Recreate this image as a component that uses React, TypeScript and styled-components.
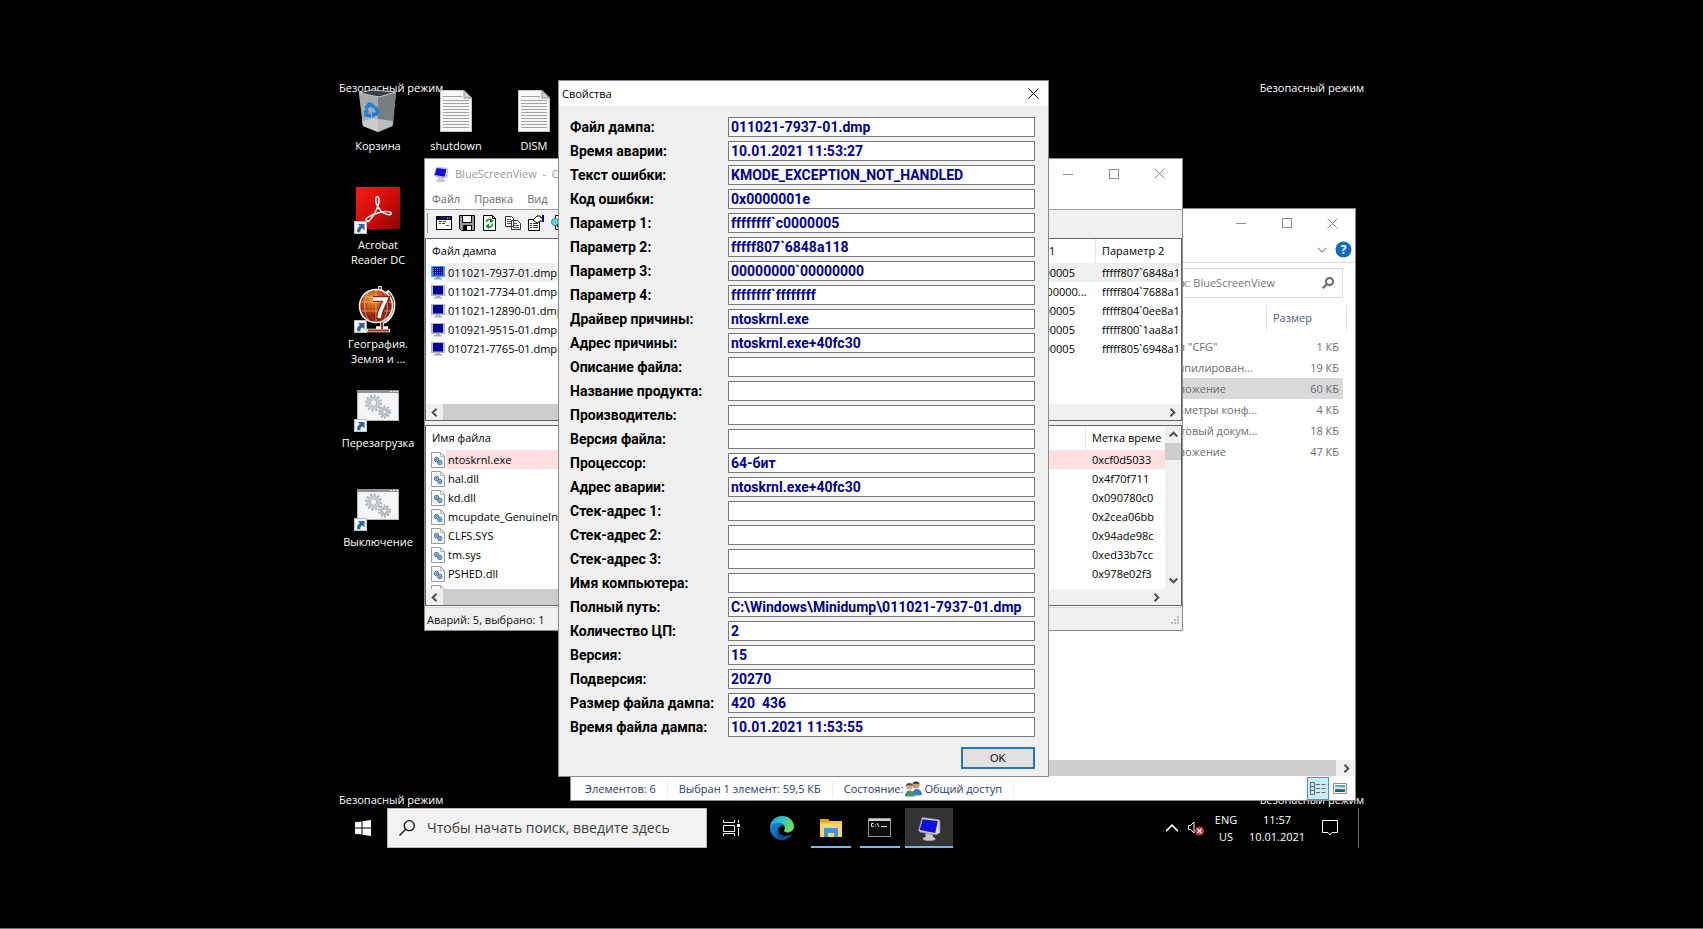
import React from "react";
import styled, { createGlobalStyle, css } from "styled-components";

const GlobalStyle = createGlobalStyle`
  * { box-sizing: border-box; }
  body { margin: 0; background: #000; font: 11px/16px "Open Sans", "Noto Sans", sans-serif; color: #111; }
  button, input { font: inherit; color: inherit; margin: 0; }
  button { padding: 0; border: 0; background: none; }
  ul { list-style: none; margin: 0; padding: 0; }
  svg { display: block; flex: none; }
`;

const Page = styled.div`
  display: flex;
  align-items: center;
  justify-content: center;
  min-height: 100vh;
  background: #000;
  border-bottom: 1px solid #707070;
`;

const Desktop = styled.main`
  display: flex;
  flex-direction: column;
  width: 1025px;
  min-height: 768px;
`;

const Workspace = styled.div`
  position: relative;
  flex: 1;
`;

const SafeMode = styled.span<{ $v: "top" | "bottom"; $h: "left" | "right" }>`
  position: absolute;
  ${(p) => p.$v}: 0;
  ${(p) => p.$h}: 0;
  color: #fff;
`;

/* Desktop shortcuts */

const Shortcuts = styled.div`
  position: absolute;
  top: 7px;
  left: 0;
  display: flex;
`;

const ShortcutColumn = styled.ul`
  width: 78px;
`;

const Shortcut = styled.li`
  display: flex;
  flex-direction: column;
  align-items: center;
  gap: 3px;
  height: 99px;
  color: #fff;
  line-height: 15px;
  text-align: center;
  white-space: pre-line;
`;

/* Windows */

const Window = styled.section<{ $left: number; $top: number; $w: number; $h: number }>`
  position: absolute;
  left: ${(p) => p.$left}px;
  top: ${(p) => p.$top}px;
  width: ${(p) => p.$w}px;
  min-height: ${(p) => p.$h}px;
  display: flex;
  flex-direction: column;
  overflow: hidden;
  background: #fff;
  border: 1px solid #8a8a8a;
`;

const TitleBar = styled.header<{ $h: number }>`
  display: flex;
  align-items: center;
  height: ${(p) => p.$h}px;
  flex: none;
`;

const TitleText = styled.span`
  flex: 1;
  white-space: pre;
  color: #999;
`;

const CaptionButton = styled.button<{ $w: number; $active?: boolean }>`
  width: ${(p) => p.$w}px;
  align-self: stretch;
  display: grid;
  place-items: center;
  color: ${(p) => (p.$active ? "#000" : "#8f8f8f")};
`;

const MenuBar = styled.nav`
  display: flex;
  gap: 14px;
  height: 21px;
  padding: 0 7px;
  align-items: center;
  color: #6d6d6d;
`;

const ToolBar = styled.div`
  display: flex;
  align-items: center;
  gap: 7px;
  height: 29px;
  padding: 0 2px 2px;
  background: #f0f0f0;
  border-top: 1px solid #a0a0a0;
`;

const Grip = styled.span`
  width: 1px;
  height: 20px;
  margin-right: 1px;
  background: #8a8a8a;
`;

const Frame = styled.div<{ $h: number }>`
  display: flex;
  flex-direction: column;
  height: ${(p) => p.$h}px;
  border: 1px solid #646464;
  background: #fff;
  overflow: hidden;
`;

const FrameBody = styled.div`
  display: flex;
  flex: 1;
  min-height: 0;
`;

const TableClip = styled.div`
  flex: 1;
  min-width: 0;
  overflow: hidden;
`;

const ListTable = styled.table`
  width: 100%;
  table-layout: fixed;
  border-collapse: separate;
  border-spacing: 0;
  color: #000;
  th, td {
    padding: 0 0 0 6px;
    font-weight: normal;
    text-align: left;
    white-space: nowrap;
    overflow: hidden;
  }
  th { height: 24px; border-right: 1px solid #e5e5e5; }
  th:last-child { border-right: 0; }
  td { height: 19px; line-height: 18px; }
  td:first-child { padding: 0; }
`;

const Row = styled.tr<{ $bg?: string }>`
  background: ${(p) => p.$bg || "#fff"};
`;

const FileCell = styled.span`
  display: flex;
  align-items: center;
  gap: 2px;
`;

const IconSlot = styled.span`
  width: 20px;
  height: 19px;
  padding-right: 1px;
  display: grid;
  place-items: center end;
  background: #fff;
`;

const HScroll = styled.div<{ $gap: number }>`
  display: flex;
  align-items: center;
  height: 16px;
  flex: none;
  background: #f0f0f0;
  color: #505050;
  padding-right: ${(p) => p.$gap}px;
`;

const ScrollButton = styled.button`
  width: 17px;
  height: 17px;
  display: grid;
  place-items: center;
`;

const HThumb = styled.span<{ $end: number }>`
  flex: 1;
  align-self: stretch;
  margin-right: ${(p) => p.$end}px;
  background: #cdcdcd;
`;

const VScroll = styled.div`
  display: flex;
  flex-direction: column;
  width: 16px;
  background: #f0f0f0;
  color: #505050;
`;

const VThumb = styled.span`
  height: 17px;
  margin-bottom: auto;
  background: #cdcdcd;
`;

const Splitter = styled.div`
  height: 4px;
  background: #f0f0f0;
`;

const StatusBar = styled.footer`
  display: flex;
  align-items: center;
  justify-content: space-between;
  flex: 1;
  margin-top: 1px;
  padding: 2px 2px 0;
  background: #f0f0f0;
  border-top: 1px solid #d7d7d7;
`;

/* Explorer */

const RibbonRow = styled.div`
  display: flex;
  align-items: center;
  justify-content: flex-end;
  gap: 8px;
  height: 26px;
  padding-right: 3px;
  color: #8f8f8f;
  border-bottom: 1px solid #dadbdc;
`;

const SearchRow = styled.div`
  display: flex;
  justify-content: flex-end;
  height: 42px;
  padding: 5px 12px 7px;
`;

const FolderSearch = styled.label`
  display: flex;
  align-items: center;
  width: 197px;
  padding: 0 8px;
  border: 1px solid #d9d9d9;
  color: #6d6d6d;
  input {
    flex: 1;
    min-width: 0;
    border: 0;
    padding: 0;
    outline: 0;
    background: none;
  }
  input::placeholder { color: #7a7a7a; opacity: 1; }
`;

const DetailsTable = styled.table`
  width: 190px;
  margin: 0 8px 0 auto;
  border-collapse: separate;
  border-spacing: 0;
  table-layout: fixed;
  color: #6d6d6d;
  th, td { font-weight: normal; text-align: left; white-space: nowrap; }
  th { height: 25px; padding: 0 6px; color: #4c607a; border-right: 1px solid #e0e0e0; }
  td { height: 21px; padding: 0; }
  td:last-child { text-align: right; padding-right: 4px; border-right: 4px solid transparent; background-clip: padding-box; }
  tbody::before { content: ""; display: block; height: 6px; }
`;

const SelectedTd = styled.td`
  background: #d9d9d9;
`;

const Spacer = styled.div`
  flex: 1;
`;

const ExplorerStatus = styled.footer`
  display: flex;
  align-items: center;
  height: 24px;
  padding: 1px 4px 0 3px;
  color: #26406b;
`;

const StatusItem = styled.span`
  display: flex;
  align-items: center;
  gap: 2px;
  padding: 0 11px;
  border-right: 1px solid #eee;
`;

const ViewButton = styled.button<{ $on?: boolean }>`
  display: grid;
  place-items: center;
  width: 22px;
  height: 23px;
  ${(p) =>
    p.$on &&
    css`
      margin-left: auto;
      background: #cde9f5;
      border: 1px solid #3c9ccb;
    `}
`;

/* Properties dialog */

const DialogBody = styled.form`
  flex: 1;
  padding: 11px 13px 7px 11px;
  background: #f0f0f0;
`;

const Field = styled.div`
  display: flex;
  align-items: center;
  height: 20px;
  margin-bottom: 4px;
  font: bold 14px/18px Roboto, "Liberation Sans", sans-serif;
  color: #000;
  label { width: 158px; white-space: nowrap; }
  input {
    flex: 1;
    min-width: 0;
    height: 20px;
    padding: 0 2px;
    border: 1px solid #7a7a7a;
    border-radius: 0;
    background: #fff;
    color: #000096;
    outline: 0;
  }
`;

const OkButton = styled.button`
  display: block;
  width: 74px;
  height: 22px;
  margin: 10px 0 0 auto;
  border: 2px solid #2a74b0;
  background: #e1e1e1;
  font: 11px/16px "Liberation Sans", Arial, sans-serif;
`;

/* Taskbar */

const TaskBar = styled.footer`
  display: flex;
  height: 40px;
  color: #fff;
`;

const SearchBox = styled.label`
  display: flex;
  align-items: center;
  gap: 12px;
  width: 320px;
  padding: 0 11px;
  background: #f2f2f2;
  border: 1px solid #b8b8b8;
  color: #222;
  font-size: 14px;
  line-height: 20px;
  input {
    flex: 1;
    min-width: 0;
    padding: 0;
    border: 0;
    outline: 0;
    background: none;
  }
  input::placeholder { color: #3c3c3c; opacity: 1; }
`;

const PlainTask = styled.button`
  width: 48px;
  display: grid;
  place-items: center;
`;

const Tasks = styled.div`
  display: flex;
  gap: 1px;
  margin-left: 3px;
`;

const Task = styled.button<{ $state?: "running" | "active" }>`
  position: relative;
  width: 48px;
  display: grid;
  place-items: center;
  background: ${(p) => (p.$state === "active" ? "#333" : "none")};
  ${(p) =>
    p.$state &&
    css`
      &::after {
        content: "";
        position: absolute;
        bottom: 0;
        left: ${p.$state === "active" ? 0 : 4}px;
        right: ${p.$state === "active" ? 0 : 4}px;
        height: 2px;
        background: #76b9ed;
      }
    `}
`;

const Tray = styled.div`
  display: flex;
  margin-left: auto;
`;

const TrayButton = styled.button<{ $w: number }>`
  width: ${(p) => p.$w}px;
  display: grid;
  place-items: center;
  align-content: center;
  line-height: 17px;
  white-space: nowrap;
`;

const ShowDesktop = styled.button`
  width: 6px;
  margin-left: 8px;
  border-left: 1px solid #6e6e6e;
`;

/* Icons */

const Minimize = () => (
  <svg width="10" height="10" viewBox="0 0 10 10" stroke="currentColor"><path d="M0 5.5h10" /></svg>
);
const Maximize = () => (
  <svg width="10" height="10" viewBox="0 0 10 10" fill="none" stroke="currentColor"><rect x=".5" y=".5" width="9" height="9" /></svg>
);
const Close = () => (
  <svg width="11" height="11" viewBox="0 0 11 11" stroke="currentColor"><path d="M.5.5l10 10M10.5.5l-10 10" /></svg>
);

const Chevron = ({ dir, size = 9, w = 2 }: { dir: "left" | "right" | "up" | "down"; size?: number; w?: number }) => {
  const d = { left: "M6.500 .700L2.700 4.500L6.500 8.300", right: "M2.500 .700l3.800 3.800L2.500 8.300", up: "M.700 6.500l3.800-3.800L8.300 6.500", down: "M.700 2.500l3.800 3.800L8.300 2.500" }[dir];
  return (
    <svg width={size} height={size} viewBox="0 0 9 9" fill="none" stroke="currentColor" strokeWidth={w}><path d={d} /></svg>
  );
};

const Arrow = () => (
  <g>
    <rect x=".5" y="35.500" width="12" height="12" fill="#f5f7f9" stroke="#b9c2cb" />
    <path d="M4 38h6.500v6.500L8.300 42.300C6.600 43.200 6.200 44.500 6.400 46.300H3.200C2.700 43.400 3.700 41.500 5.900 40z" fill="#2f63a4" />
  </g>
);

const RecycleBin = () => (
  <svg width="48" height="48" viewBox="0 0 48 48">
    <path d="M5 6L24 9L42 5L39 39L24 45L9 39z" fill="#8c9093" />
    <path d="M5 6L24 10V45L9 39z" fill="#a8abad" />
    <path d="M24 10L42 6L38 39L24 45z" fill="#797d80" />
    <path d="M5 6L18 3L42 5L25 10z" fill="#3c4043" stroke="#c7c9ca" strokeWidth="1" />
    <path d="M8 34l10-3 21 3-1 5-14 6-15-6z" fill="#d5d7d8" opacity=".7" />
    <g fill="none" stroke="#1c80d4" strokeWidth="3.500">
      <path d="M12 22l3-5 4 2" /><path d="M21 20l3 5-3 3" /><path d="M17 29l-5-1 0-4" />
    </g>
    <path d="M17 15l5 5-5 1zM24 27l-6 4 0-6zM9 24l4-2 3 4z" fill="#1c80d4" />
  </svg>
);

const TextFile = () => (
  <svg width="48" height="48" viewBox="0 0 48 48">
    <path d="M8.500 3.500h23.500l7.500 7.500v33.500h-31z" fill="#f7f7f7" stroke="#c5c5c5" />
    <path d="M32 3.500v7.500h7.500z" fill="#d4d4d4" stroke="#909090" />
    <path d="M11 9.500h19M11 13.500h26M11 16.500h26M11 19.500h26M11 22.500h26M11 25.500h26M11 28.500h26M11 31.500h26M11 34.500h26M11 37.500h26M11 40.500h26" stroke="#a3a3a3" />
  </svg>
);

const Acrobat = () => (
  <svg width="48" height="48" viewBox="0 0 48 48">
    <defs>
      <linearGradient id="acro" x1="0" y1="0" x2="1" y2="1">
        <stop offset="0" stopColor="#ff1a14" /><stop offset=".5" stopColor="#cf0d0a" /><stop offset="1" stopColor="#8a0503" />
      </linearGradient>
    </defs>
    <rect x="2" y="1" width="44" height="42" fill="url(#acro)" />
    <path d="M13 35c-3-2 3-6 11-8 6-2 12-2 13 0 1 3-6 2-10-2-4-4-6-10-5-13 1-3 4-1 3 4-1 6-6 15-9 18-1 1-2 2-3 1z" fill="none" stroke="#fff" strokeWidth="1.500" />
    <Arrow />
  </svg>
);

const Globe = () => (
  <svg width="48" height="48" viewBox="0 0 48 48">
    <defs>
      <radialGradient id="globe" cx=".4" cy=".3"><stop offset="0" stopColor="#f0a03c" /><stop offset=".6" stopColor="#c4501a" /><stop offset="1" stopColor="#8e2410" /></radialGradient>
    </defs>
    <path d="M26 1v6M33 6c10 8 9 26-5 32v5M13 45.500h23M22 43h12" fill="none" stroke="#fff" strokeWidth="3.500" />
    <path d="M26 2v5M34 8c8 8 7 22-6 29v7M14 45.500h21" fill="none" stroke="#a42a18" strokeWidth="2" />
    <circle cx="22" cy="21" r="16.500" fill="url(#globe)" stroke="#fff" strokeWidth="1.500" />
    <path d="M6 17h32M7 26h30M9 12h26M22 5v32M15 6c-6 9-6 21 0 30M29 6c6 9 6 21 0 30" fill="none" stroke="#ffd9a0" strokeWidth=".7" opacity=".8" />
    <path d="M19 14h13c-2 6-6 9-7 20" fill="none" stroke="#8a2412" strokeWidth="6" />
    <path d="M19 14h13c-2 6-6 9-7 19" fill="none" stroke="#fff" strokeWidth="3.500" />
    <Arrow />
  </svg>
);

const GearWindow = () => (
  <svg width="48" height="48" viewBox="0 0 48 48">
    <rect x="3.500" y="6.500" width="41" height="30" fill="#f4f5f6" stroke="#b4b7b9" />
    <rect x="3" y="6" width="42" height="3" fill="#8f9294" />
    <path d="M36 7.500h2M39 7.500h2M42 7.500h2" stroke="#e8e8e8" />
    <g fill="none" stroke="#a9b1b7">
      <circle cx="19.500" cy="19" r="7" strokeWidth="3" strokeDasharray="2 1.660" />
      <circle cx="19.500" cy="19" r="5.200" strokeWidth="3" stroke="#c3c9cd" />
      <circle cx="19.500" cy="19" r="3.300" strokeWidth="1" />
      <circle cx="30.500" cy="28" r="5.200" strokeWidth="2.500" strokeDasharray="1.800 1.470" />
      <circle cx="30.500" cy="28" r="3.600" strokeWidth="2.500" stroke="#b9c0c5" />
      <circle cx="30.500" cy="28" r="2" strokeWidth="1" />
    </g>
    <Arrow />
  </svg>
);

const Monitor = ({ selected }: { selected?: boolean }) => (
  <svg width="14" height="15" viewBox="0 0 14 15">
    <rect x=".5" y="1.500" width="13" height="10" fill={selected ? "#3b8fe0" : "#c3c7d0"} stroke={selected ? "#4aa0ea" : "#aeb4c0"} />
    <rect x="2" y="2" width="10" height="8.500" fill="#000096" />
    {selected && <path d="M2 3.500h10M2 5.500h10M2 7.500h10M2 9.500h10" stroke="#3f8fe6" strokeDasharray="1 1" />}
    <path d="M5 12h4v1h2v1.500H3V13h2z" fill={selected ? "#6aa7da" : "#a9adb6"} />
  </svg>
);

const TiltedMonitor = ({ size }: { size: number }) => (
  <svg width={size} height={size} viewBox="1 -1 24 24">
    <path d="M6 .500L2.500 13l2 1.500 15 2.500 3.500-2V4l-1-1.500z" fill="#d9d9de" stroke="#8c8c94" strokeWidth=".7" />
    <path d="M6.500 2L3.500 12.500l15 2.800L21 3.800z" fill="#0d10e0" />
    <path d="M9 15.500l7 1 .5 3c3 .5 3 2.500-.5 3-4 .7-9 0-9.500-1.500 0-1 1.500-1.500 3-1.800z" fill="#c9c9cf" stroke="#909098" strokeWidth=".5" />
  </svg>
);

const GearFile = () => (
  <svg width="14" height="16" viewBox="0 0 14 16">
    <path d="M.5.5h9l4 4v11H.5z" fill="#fafafa" stroke="#9a9a9a" />
    <path d="M9.500.5v4h4" fill="none" stroke="#b5b5b5" />
    <g fill="#b9d3ea" stroke="#2d6499" strokeWidth=".9">
      <circle cx="5.500" cy="7.500" r="2.200" /><circle cx="5.500" cy="7.500" r=".6" />
      <circle cx="8.800" cy="10.500" r="2.200" /><circle cx="8.800" cy="10.500" r=".6" />
    </g>
  </svg>
);

const ToolIcons = [
  <svg key="options" width="16" height="16" viewBox="0 0 16 16"><path d="M0 1h16v14H0z" fill="#000" /><path d="M1 2h14v2H1z" fill="#000080" /><path d="M1 5h14v9H1z" fill="#fff" /><path d="M11 3h1M13 3h1" stroke="#fff" /><path d="M3 6.500h3M7 6.500h3M3 8.500h2M6 8.500h3M10 10.500h3" stroke="#444" /></svg>,
  <svg key="save" width="16" height="16" viewBox="0 0 16 16"><path d="M.5.5h15v15H2.500l-2-2z" fill="#9a9a9a" stroke="#000" /><path d="M3.500.5h9v7h-9z" fill="#fff" stroke="#000" /><path d="M4.500 10.500h8v5h-8z" fill="#fff" stroke="#000" /><path d="M5 11h3v4H5z" fill="#000" /></svg>,
  <svg key="refresh" width="16" height="16" viewBox="0 0 16 16"><path d="M1.500.5h9l3 3v12h-12z" fill="#fff" stroke="#000" /><path d="M10.500.5v3h3" fill="none" stroke="#000" /><path d="M4.500 7c0-3 3-3 4.500-2M10.500 8.500c0 4-3 4-5 3" fill="none" stroke="#0a8a2a" strokeWidth="1.500" /><path d="M8 3l4 3-4 2zM7 8.500L3.500 11 7 14z" fill="#0a8a2a" /></svg>,
  <svg key="copy" width="16" height="16" viewBox="0 0 16 16"><path d="M.5 1.500h6l2 2v8h-8zM6.500 5.500h6l3 3v6h-9z" fill="#fff" stroke="#333" /><path d="M2 4.500h4M2 6.500h4M2 8.500h4M8 8.500h4M8 10.500h6M8 12.500h6" stroke="#555" /></svg>,
  <svg key="properties" width="16" height="16" viewBox="0 0 16 16"><path d="M.5 4.500h11v11H.5z" fill="#fff" stroke="#000" /><path d="M2 8.500h2M5 8.500h5M2 10.500h2M5 10.500h5M2 12.500h2M5 12.500h5" stroke="#333" /><path d="M5 5l4-4h3l1 2h2v3h-3l-3 2z" fill="#fff" stroke="#000" /><path d="M14 0h2v7h-2z" fill="#000096" /></svg>,
  <svg key="find" width="16" height="16" viewBox="0 0 16 16"><path d="M4.500.5h10v14h-10z" fill="#fff" stroke="#000" /><circle cx="4" cy="7" r="3.500" fill="#5fd6dc" stroke="#3b8c94" /><path d="M6 10l4 4" stroke="#000" strokeWidth="2" /></svg>,
];

const People = () => (
  <svg width="17" height="16" viewBox="0 0 17 16">
    <circle cx="11" cy="4" r="3.500" fill="#c99b74" /><path d="M7.500 3.500C7.500-.5 14.500-.5 14.500 3.500c-2-1-5-1-7 0z" fill="#4b3a2a" />
    <path d="M6.500 15c0-9 10-9 10.500-1z" fill="#3c7fb8" />
    <circle cx="4.500" cy="5.500" r="3.300" fill="#d8ab84" /><path d="M1 5C1 1 8 1 8 5 6 4 3 4 1 5z" fill="#5d4a38" />
    <path d="M0 15.500c0-8 9-8 9.500 0z" fill="#4a9070" />
  </svg>
);

/* Data */

const dumps: [string, string, string][] = [
  ["011021-7937-01.dmp", "ffffffff`c0000005", "fffff807`6848a118"],
  ["011021-7734-01.dmp", "00000000`00000...", "fffff804`7688a118"],
  ["011021-12890-01.dmp", "ffffffff`c0000005", "fffff804`0ee8a118"],
  ["010921-9515-01.dmp", "ffffffff`c0000005", "fffff800`1aa8a118"],
  ["010721-7765-01.dmp", "ffffffff`c0000005", "fffff805`6948a118"],
];

const modules: [string, string][] = [
  ["ntoskrnl.exe", "0xcf0d5033"],
  ["hal.dll", "0x4f70f711"],
  ["kd.dll", "0x090780c0"],
  ["mcupdate_GenuineIntel.dll", "0x2cea06bb"],
  ["CLFS.SYS", "0x94ade98c"],
  ["tm.sys", "0xed33b7cc"],
  ["PSHED.dll", "0x978e02f3"],
  ["", ""],
];

const files: [string, string][] = [
  ['Файл "CFG"', "1 КБ"],
  ["Скомпилирован...", "19 КБ"],
  ["Приложение", "60 КБ"],
  ["Параметры конф...", "4 КБ"],
  ["Текстовый докум...", "18 КБ"],
  ["Приложение", "47 КБ"],
];

const fields: [string, string][] = [
  ["Файл дампа:", "011021-7937-01.dmp"],
  ["Время аварии:", "10.01.2021 11:53:27"],
  ["Текст ошибки:", "KMODE_EXCEPTION_NOT_HANDLED"],
  ["Код ошибки:", "0x0000001e"],
  ["Параметр 1:", "ffffffff`c0000005"],
  ["Параметр 2:", "fffff807`6848a118"],
  ["Параметр 3:", "00000000`00000000"],
  ["Параметр 4:", "ffffffff`ffffffff"],
  ["Драйвер причины:", "ntoskrnl.exe"],
  ["Адрес причины:", "ntoskrnl.exe+40fc30"],
  ["Описание файла:", ""],
  ["Название продукта:", ""],
  ["Производитель:", ""],
  ["Версия файла:", ""],
  ["Процессор:", "64-бит"],
  ["Адрес аварии:", "ntoskrnl.exe+40fc30"],
  ["Стек-адрес 1:", ""],
  ["Стек-адрес 2:", ""],
  ["Стек-адрес 3:", ""],
  ["Имя компьютера:", ""],
  ["Полный путь:", "C:\\Windows\\Minidump\\011021-7937-01.dmp"],
  ["Количество ЦП:", "2"],
  ["Версия:", "15"],
  ["Подверсия:", "20270"],
  ["Размер файла дампа:", "420\u00a0\u00a0436"],
  ["Время файла дампа:", "10.01.2021 11:53:55"],
];

const shortcuts: [string, () => React.ReactElement][][] = [
  [
    ["Корзина", RecycleBin],
    ["Acrobat\nReader DC", Acrobat],
    ["География.\nЗемля и ...", Globe],
    ["Перезагрузка", GearWindow],
    ["Выключение", GearWindow],
  ],
  [["shutdown", TextFile]],
  [["DISM", TextFile]],
];

const CaptionButtons = () => (
  <>
    <CaptionButton $w={46} aria-label="Свернуть"><Minimize /></CaptionButton>
    <CaptionButton $w={45} aria-label="Развернуть"><Maximize /></CaptionButton>
    <CaptionButton $w={46} aria-label="Закрыть"><Close /></CaptionButton>
  </>
);

const Explorer = () => (
  <Window $left={231} $top={128} $w={786} $h={593}>
    <TitleBar $h={28}><TitleText /><CaptionButtons /></TitleBar>
    <RibbonRow>
      <Chevron dir="down" size={10} w={1} />
      <svg width="17" height="17" viewBox="0 0 17 17"><circle cx="8.500" cy="8.500" r="8" fill="#0f6cbd" /><text x="8.500" y="13" fontSize="12" fontWeight="bold" fill="#fff" textAnchor="middle">?</text></svg>
    </RibbonRow>
    <SearchRow>
      <FolderSearch>
        <input placeholder="Поиск: BlueScreenView" />
        <svg width="12" height="12" viewBox="0 0 12 12" fill="none" stroke="#666" strokeWidth="2"><circle cx="7.500" cy="4.500" r="3.500" /><path d="M5 7L.7 11.300" /></svg>
      </FolderSearch>
    </SearchRow>
    <DetailsTable>
      <colgroup><col /><col style={{ width: 80 }} /></colgroup>
      <thead><tr><th>Тип</th><th>Размер</th></tr></thead>
      <tbody>
        {files.map(([type, size], i) => (
          <tr key={i}>
            {i === 2 ? <><SelectedTd>{type}</SelectedTd><SelectedTd>{size}</SelectedTd></> : <><td>{type}</td><td>{size}</td></>}
          </tr>
        ))}
      </tbody>
    </DetailsTable>
    <Spacer />
    <HScroll $gap={0}>
      <ScrollButton aria-label="Влево"><Chevron dir="left" /></ScrollButton>
      <HThumb $end={2} />
      <ScrollButton aria-label="Вправо"><Chevron dir="right" /></ScrollButton>
    </HScroll>
    <ExplorerStatus>
      <StatusItem>Элементов: 6</StatusItem>
      <StatusItem>Выбран 1 элемент: 59,5 КБ</StatusItem>
      <StatusItem>Состояние: <People /> Общий доступ</StatusItem>
      <ViewButton $on aria-label="Таблица">
        <svg width="16" height="13" viewBox="0 0 16 13" fill="none" stroke="#5d6b75"><path d="M.5.5h4v12h-4zM.5 4.500h4M.5 8.500h4M6 2.500h4M11.500 2.500h4M6 6.500h4M11.500 6.500h4M6 10.500h4M11.500 10.500h4" /></svg>
      </ViewButton>
      <ViewButton aria-label="Крупные значки">
        <svg width="14" height="11" viewBox="0 0 14 11"><path d="M.5.5h13v10H.5z" fill="#fff" stroke="#8a9299" /><path d="M2 2h10v7H2z" fill="#5aa0e0" /><path d="M2 4c3-1 5 1 10 0v2c-4 1-7-1-10 0z" fill="#d8e8f4" /><path d="M2 7c3-2 6 1 10-1v3H2z" fill="#2f5f5a" /></svg>
      </ViewButton>
    </ExplorerStatus>
  </Window>
);

const IconGap = styled.span`
  padding: 0 6px 0 8px;
`;

const BlueScreenView = () => (
  <Window $left={85} $top={78} $w={759} $h={473}>
    <TitleBar $h={29}>
      <IconGap><TiltedMonitor size={16} /></IconGap>
      <TitleText>{"BlueScreenView  -  C:\\Windows\\Minidump"}</TitleText>
      <CaptionButtons />
    </TitleBar>
    <MenuBar><span>Файл</span><span>Правка</span><span>Вид</span></MenuBar>
    <ToolBar><Grip />{ToolIcons}</ToolBar>
    <Frame $h={183}>
      <FrameBody>
        <TableClip>
          <ListTable>
            <colgroup><col /><col style={{ width: 109 }} /><col style={{ width: 85 }} /></colgroup>
            <thead><tr><th>Файл дампа</th><th>Параметр 1</th><th>Параметр 2</th></tr></thead>
            <tbody>
              {dumps.map(([name, p1, p2], i) => (
                <Row key={name} $bg={i === 0 ? "#f0f0f0" : undefined}>
                  <td><FileCell><IconSlot><Monitor selected={i === 0} /></IconSlot>{name}</FileCell></td>
                  <td>{p1}</td>
                  <td>{p2}</td>
                </Row>
              ))}
            </tbody>
          </ListTable>
        </TableClip>
      </FrameBody>
      <HScroll $gap={0}>
        <ScrollButton aria-label="Влево"><Chevron dir="left" /></ScrollButton>
        <HThumb $end={200} />
        <ScrollButton aria-label="Вправо"><Chevron dir="right" /></ScrollButton>
      </HScroll>
    </Frame>
    <Splitter />
    <Frame $h={181}>
      <FrameBody>
        <TableClip>
          <ListTable>
            <colgroup><col /><col style={{ width: 79 }} /></colgroup>
            <thead><tr><th>Имя файла</th><th>Метка време</th></tr></thead>
            <tbody>
              {modules.map(([name, stamp], i) => (
                <Row key={name} $bg={i === 0 ? "#ffdfdf" : undefined}>
                  <td><FileCell><IconSlot><GearFile /></IconSlot>{name}</FileCell></td>
                  <td>{stamp}</td>
                </Row>
              ))}
            </tbody>
          </ListTable>
        </TableClip>
        <VScroll>
          <ScrollButton aria-label="Вверх"><Chevron dir="up" /></ScrollButton>
          <VThumb />
          <ScrollButton aria-label="Вниз"><Chevron dir="down" /></ScrollButton>
        </VScroll>
      </FrameBody>
      <HScroll $gap={16}>
        <ScrollButton aria-label="Влево"><Chevron dir="left" /></ScrollButton>
        <HThumb $end={200} />
        <ScrollButton aria-label="Вправо"><Chevron dir="right" /></ScrollButton>
      </HScroll>
    </Frame>
    <StatusBar>
      <span>Аварий: 5, выбрано: 1</span>
      <svg width="9" height="9" viewBox="0 0 9 9" fill="#bcbcbc"><path d="M6 0h2v2H6zM3 3h2v2H3zM6 3h2v2H6zM0 6h2v2H0zM3 6h2v2H3zM6 6h2v2H6z" /></svg>
    </StatusBar>
  </Window>
);

const DialogTitle = styled(TitleText)`
  padding-left: 3px;
  color: #000;
`;

const PropertiesDialog = () => (
  <Window $left={219} $top={0} $w={491} $h={697} role="dialog" aria-label="Свойства">
    <TitleBar $h={25}>
      <DialogTitle>Свойства</DialogTitle>
      <CaptionButton $w={30} $active aria-label="Закрыть"><Close /></CaptionButton>
    </TitleBar>
    <DialogBody onSubmit={(e) => e.preventDefault()}>
      {fields.map(([label, value], i) => (
        <Field key={label}>
          <label htmlFor={`field-${i}`}>{label}</label>
          <input id={`field-${i}`} defaultValue={value} readOnly />
        </Field>
      ))}
      <OkButton>OK</OkButton>
    </DialogBody>
  </Window>
);

const EdgeIcon = () => (
  <svg width="24" height="24" viewBox="0 0 24 24">
    <defs>
      <linearGradient id="e1" x1="0" y1="0" x2="1" y2=".4"><stop offset="0" stopColor="#1e9be0" /><stop offset=".5" stopColor="#2fc3c8" /><stop offset="1" stopColor="#6be05a" /></linearGradient>
      <linearGradient id="e2" x1="0" y1="0" x2="1" y2="1"><stop offset="0" stopColor="#1b8ad8" /><stop offset="1" stopColor="#0c4f9c" /></linearGradient>
    </defs>
    <path d="M0 12C0 5 5 0 12 0s12 5 12 10.500c0 3.500-3 6-6.500 6-2.500 0-4-1-3.300-2.200C16 12 14.500 7.500 9.500 7.500 4.500 7.500 0 10 0 12z" fill="url(#e1)" />
    <path d="M0 12c0-3 4-5.500 9-5.200 3 .2 5 2 5.500 3.700-3-2-6.500.5-6.500 4.500C8 20 12 23 16 23.300 8 26 0 20 0 12z" fill="url(#e2)" />
    <path d="M9 13c-1.500 6 6 9 13 5-2 4-6 6-10 6C6 21 6 15 9 13z" fill="#114a8b" />
  </svg>
);

const Taskbar = () => (
  <TaskBar>
    <PlainTask aria-label="Пуск">
      <svg width="16" height="16" viewBox="0 0 16 16" fill="#fff"><path d="M0 2.300L6.500 1.400V7.500H0zM7.500 1.200L16 0V7.500H7.500zM0 8.500h6.500v6.100L0 13.700zM7.500 8.500H16V16l-8.500-1.200z" /></svg>
    </PlainTask>
    <SearchBox>
      <svg width="16" height="16" viewBox="0 0 16 16" fill="none" stroke="#111" strokeWidth="1.300"><circle cx="10.300" cy="5.700" r="5" /><path d="M6.700 9.300L.5 15.500" /></svg>
      <input placeholder="Чтобы начать поиск, введите здесь" />
    </SearchBox>
    <PlainTask aria-label="Представление задач">
      <svg width="17" height="16" viewBox="0 0 17 16" fill="none" stroke="#fff"><path d="M.5 0v2.500h11V0M.5 5.500h11v6H.5zM.5 16v-2.500h11V16M15.500 0v3M15.500 8v8" /><path d="M14 4h3v3h-3z" fill="#fff" stroke="none" /></svg>
    </PlainTask>
    <Tasks>
      <Task aria-label="Edge"><EdgeIcon /></Task>
      <Task $state="running" aria-label="Проводник">
        <svg width="22" height="20" viewBox="0 0 22 20"><path d="M0 1h8l2 2h12v16H0z" fill="#e2a325" /><path d="M0 5h22v14H0z" fill="#ffd766" /><path d="M0 4.500h10l1.500-1.500H22v3H0z" fill="#fbc544" /><path d="M4 19v-9h14v9h-4v-4H8v4z" fill="#3c95d6" /></svg>
      </Task>
      <Task $state="running" aria-label="Командная строка">
        <svg width="24" height="20" viewBox="0 0 24 20"><path d="M.5.500h22v18H.500z" fill="#0c0c0c" stroke="#9a9a9a" /><path d="M1 1h21v2H1z" fill="#d0d0d0" /><path d="M5.500 5.500h-2v3h2M7.500 6v.500M7.500 8v.500M9 5l2 4M13 8.500h6" stroke="#eee" fill="none" /></svg>
      </Task>
      <Task $state="active" aria-label="BlueScreenView"><TiltedMonitor size={25} /></Task>
    </Tasks>
    <Tray>
      <TrayButton $w={24} aria-label="Скрытые значки"><Chevron dir="up" size={14} w={1} /></TrayButton>
      <TrayButton $w={24} aria-label="Громкость">
        <svg width="16" height="16" viewBox="0 0 16 16"><path d="M.5 5.500h2L6 2v11L2.500 9.500h-2z" fill="none" stroke="#fff" /><circle cx="11.500" cy="11" r="4.500" fill="#d3323c" /><path d="M9.500 9l4 4M13.500 9l-4 4" stroke="#fff" strokeWidth="1.300" /></svg>
      </TrayButton>
      <TrayButton $w={36}><span>ENG</span><span>US</span></TrayButton>
      <TrayButton $w={66}><span>11:57</span><span>10.01.2021</span></TrayButton>
      <TrayButton $w={40} aria-label="Уведомления">
        <svg width="16" height="16" viewBox="0 0 16 16" fill="none" stroke="#fff"><path d="M.5.500h15v12H10l-2 2.500-2-2.500H.500z" /></svg>
      </TrayButton>
      <ShowDesktop aria-label="Свернуть все окна" />
    </Tray>
  </TaskBar>
);

export default function App() {
  return (
    <Page>
      <GlobalStyle />
      <Desktop>
        <Workspace>
          <SafeMode $v="top" $h="left">Безопасный режим</SafeMode>
          <SafeMode $v="top" $h="right">Безопасный режим</SafeMode>
          <SafeMode $v="bottom" $h="left">Безопасный режим</SafeMode>
          <SafeMode $v="bottom" $h="right">Безопасный режим</SafeMode>
          <Shortcuts>
            {shortcuts.map((column, i) => (
              <ShortcutColumn key={i}>
                {column.map(([name, Icon]) => (
                  <Shortcut key={name}><Icon />{name}</Shortcut>
                ))}
              </ShortcutColumn>
            ))}
          </Shortcuts>
          <Explorer />
          <BlueScreenView />
          <PropertiesDialog />
        </Workspace>
        <Taskbar />
      </Desktop>
    </Page>
  );
}
